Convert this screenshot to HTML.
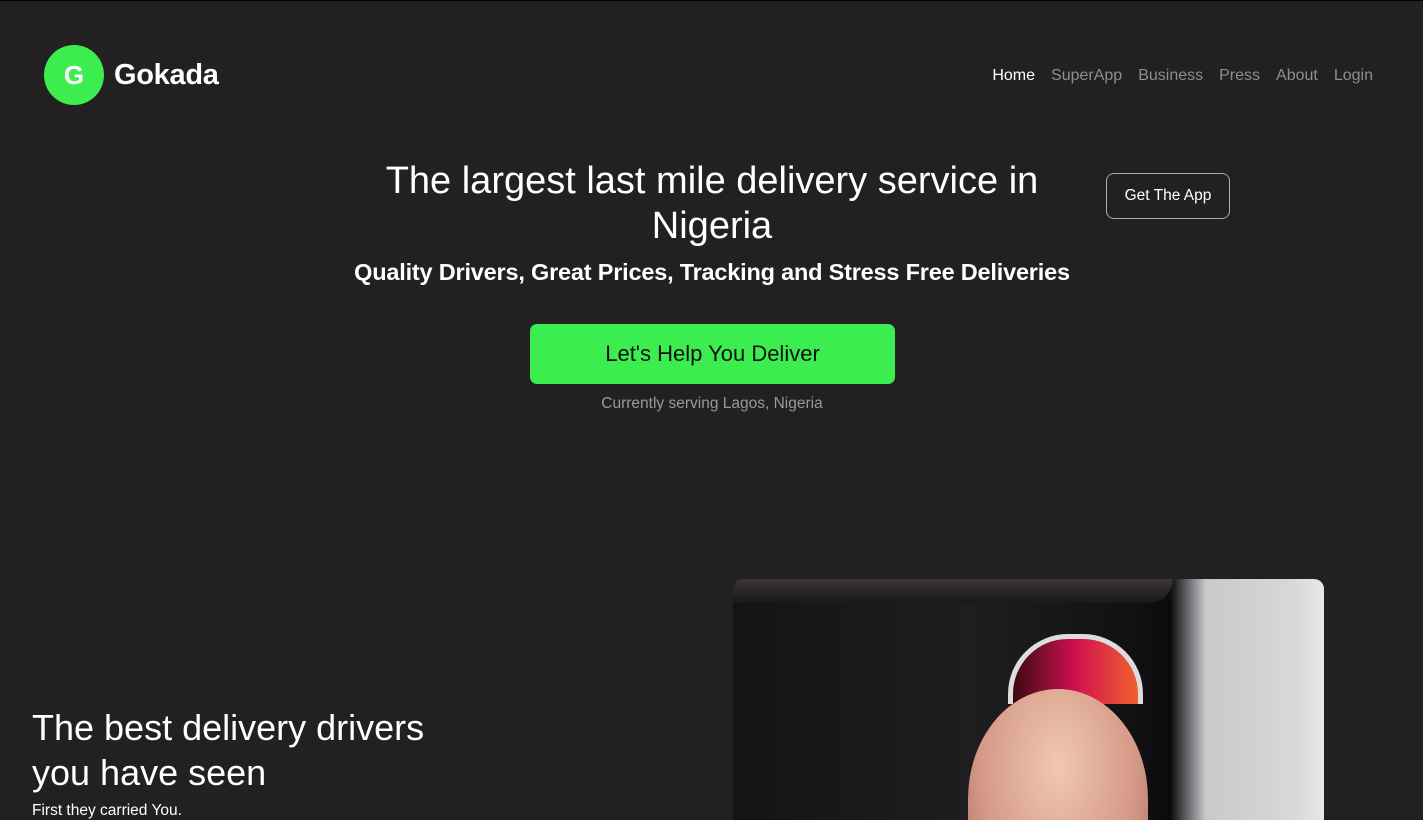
<!DOCTYPE html>
<html><head><meta charset="utf-8"><style>
*{margin:0;padding:0;box-sizing:border-box}
html,body{width:1423px;height:820px;overflow:hidden;background:#222021;font-family:"Liberation Sans",sans-serif;color:#fff;position:relative}
.top{position:absolute;left:0;top:0;width:1423px;height:1px;background:#000}
.logo{position:absolute;left:44px;top:45px;width:60px;height:60px;border-radius:50%;background:#3ced50;color:#fff;font-weight:bold;font-size:26px;display:flex;align-items:center;justify-content:center}
.brand{position:absolute;left:114px;top:59px;font-size:29px;font-weight:bold;letter-spacing:-0.3px}
.nav{position:absolute;right:50px;top:67px;font-size:16px;display:flex;gap:16px;color:#8f8d8e}
.nav span:first-child{color:#fff}
h1{position:absolute;left:332px;width:760px;top:159px;text-align:center;font-size:38px;font-weight:normal;line-height:45px}
.sub{position:absolute;left:250px;width:924px;top:259px;text-align:center;font-size:23.5px;font-weight:bold;letter-spacing:-0.2px}
.cta{position:absolute;left:530px;top:324px;width:365px;height:60px;border-radius:7px;background:#3ced50;color:#111;font-size:22px;display:flex;align-items:center;justify-content:center}
.note{position:absolute;left:400px;width:624px;top:395px;text-align:center;font-size:15.5px;color:#9a9899}
.app{position:absolute;left:1106px;top:173px;width:124px;height:46px;border:1px solid #aaa;border-radius:8px;font-size:15.5px;display:flex;align-items:center;justify-content:center}
h2{position:absolute;left:32px;top:705px;font-size:36px;font-weight:normal;line-height:45px}
.p{position:absolute;left:32px;top:802px;font-size:15.5px}
.photo{position:absolute;left:733px;top:579px;width:591px;height:241px;border-radius:10px 10px 0 0;overflow:hidden;background:linear-gradient(90deg,#141315 0%,#1e1d20 40%,#111012 68%,#0b0a0c 74%,#6a6a6e 77%,#c9c9cc 80%,#d8d8da 95%,#e8e8ea 100%)}
.photo .arc{position:absolute;left:0;top:0;width:440px;height:24px;background:linear-gradient(180deg,#3a3538,#1a181a);border-radius:0 0 60px 0}
.face{position:absolute;left:235px;top:110px;width:180px;height:220px;border-radius:50% 50% 40% 40%;background:radial-gradient(ellipse at 50% 35%,#f0c8b0,#d59a88 60%,#a86858)}
.visor{position:absolute;left:275px;top:55px;width:135px;height:70px;border-radius:60px 60px 0 0;border:5px solid #ddd;border-bottom:none;background:linear-gradient(90deg,#3a0a10,#d01050,#f06030)}
</style></head><body>
<div class="top"></div>
<div class="logo">G</div><div class="brand">Gokada</div>
<div class="nav"><span>Home</span><span>SuperApp</span><span>Business</span><span>Press</span><span>About</span><span>Login</span></div>
<h1>The largest last mile delivery service in Nigeria</h1>
<div class="sub">Quality Drivers, Great Prices, Tracking and Stress Free Deliveries</div>
<div class="cta">Let's Help You Deliver</div>
<div class="note">Currently serving Lagos, Nigeria</div>
<div class="app">Get The App</div>
<h2>The best delivery drivers<br>you have seen</h2>
<div class="p">First they carried You.</div>
<div class="photo"><div class="arc"></div><div class="visor"></div><div class="face"></div></div>
</body></html>
